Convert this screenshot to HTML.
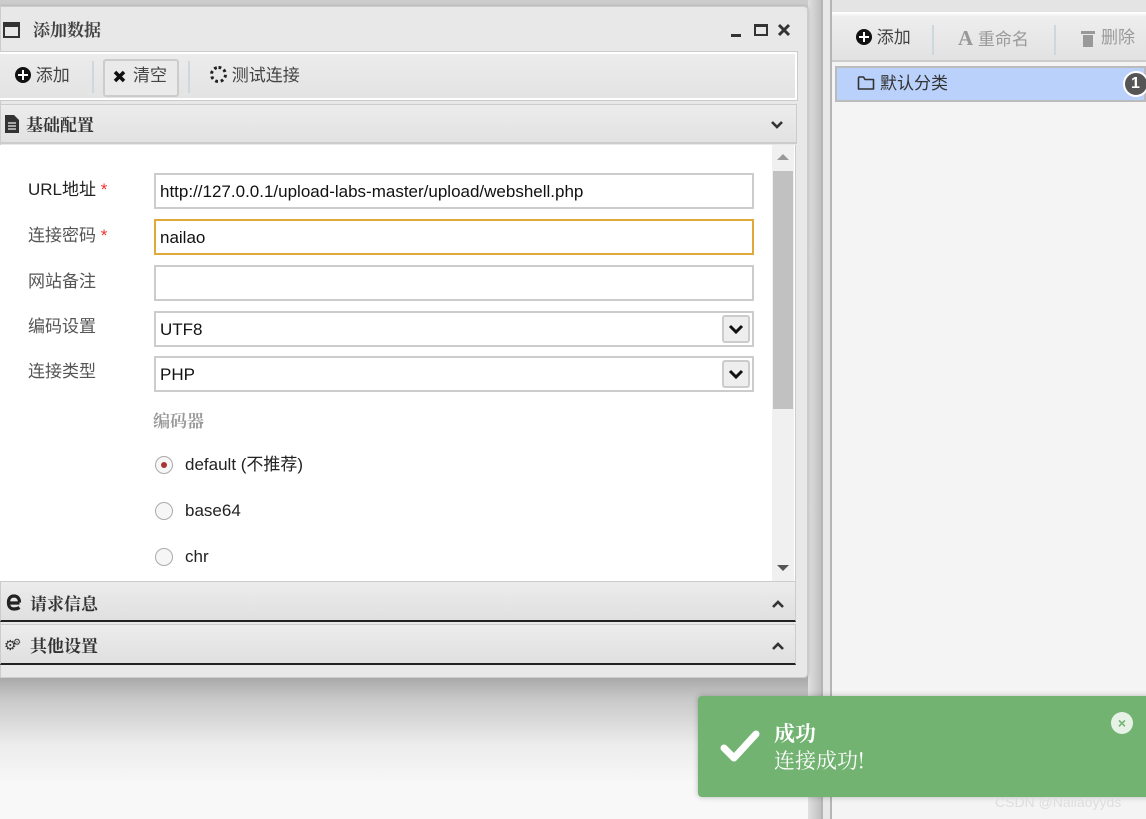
<!DOCTYPE html>
<html><head><meta charset="utf-8"><style>
*{box-sizing:border-box;margin:0;padding:0}
body{width:1146px;height:819px;overflow:hidden;position:relative;background:#fafafa;font-family:"Liberation Sans","Noto Sans CJK SC",sans-serif;color:#333;line-height:20px}
.a{position:absolute}
.cn{font-family:"Noto Serif CJK SC","Noto Sans CJK SC",serif}
.inp{position:absolute;left:154px;width:600px;height:36px;border:2px solid #ccc;background:#fff;font-size:17px;padding:7px 4px;color:#111}
.lbl{position:absolute;left:28px;font-size:17px;color:#555}
.star{color:#e33}
.sel{position:absolute;right:2px;top:2px;width:28px;height:28px;border:2px solid #ccc;border-radius:3px;background:#eee}
.radio{position:absolute;left:155px;width:18px;height:18px;border:1px solid #aaa;border-radius:50%;background:#f6f6f6}
.hdr{position:absolute;left:0;width:796px;height:41px;background:linear-gradient(#ececec,#e0e0e0);border:1px solid #ccc;border-bottom:2px solid #222}
.plus{display:inline-block;width:16px;height:16px;border-radius:50%;background:#111;position:relative;vertical-align:-2px}
.plus:before{content:"";position:absolute;left:3px;top:7px;width:10px;height:2px;background:#fff}
.plus:after{content:"";position:absolute;left:7px;top:3px;width:2px;height:10px;background:#fff}
</style></head><body>
<div class="a" style="left:0;top:0;width:822px;height:819px;background:#f8f8f8"></div>
<div class="a" style="left:0;top:660px;width:820px;height:130px;background:linear-gradient(#8f8f8f,#c8c8c8 30%,#ececec 65%,#f8f8f8 95%)"></div>
<div class="a" style="left:0;top:0;width:822px;height:8px;background:#ccc"></div>
<div class="a" style="left:808px;top:0;width:14px;height:819px;background:linear-gradient(90deg,#e0e0e0,#bdbdbd)"></div>
<div class="a" style="left:821px;top:0;width:2px;height:819px;background:#b5b5b5"></div>
<div class="a" style="left:823px;top:0;width:8px;height:819px;background:#e8e8e8"></div>
<div class="a" style="left:830px;top:0;width:2px;height:819px;background:#b5b5b5"></div>
<!-- right panel -->
<div class="a" style="left:832px;top:0;width:314px;height:819px;background:#f4f4f4"></div>
<div class="a" style="left:832px;top:0;width:314px;height:14px;background:#e4e4e4;border-bottom:2px solid #fff"></div>
<div class="a" style="left:832px;top:16px;width:314px;height:46px;background:linear-gradient(#eee,#e2e2e2);border-bottom:2px solid #ccc"></div>
<div class="a" style="left:856px;top:28px;font-size:17px;color:#444"><span class="plus"></span> 添加</div>
<div class="a" style="left:932px;top:25px;width:2px;height:30px;background:#cdd8dc"></div>
<div class="a" style="left:958px;top:28px;font-size:17px;color:#999"><b style="font-family:'Liberation Serif';font-size:21px">A</b> 重命名</div>
<div class="a" style="left:1054px;top:25px;width:2px;height:30px;background:#cdd8dc"></div>
<div class="a" style="left:1081px;top:31px;width:14px;height:3px;background:#999"></div>
<div class="a" style="left:1083px;top:35px;width:10px;height:12px;background:#999"></div>
<div class="a" style="left:1101px;top:28px;font-size:17px;color:#999">删除</div>
<div class="a" style="left:835px;top:66px;width:311px;height:36px;background:#b9d1fb;border:2px solid #bbb"></div>
<svg class="a" style="left:857px;top:75px" width="18" height="16" viewBox="0 0 18 16"><path d="M1.5 3V14H16.5V4.5H8L6.5 2H2Z" fill="none" stroke="#333" stroke-width="1.6" stroke-linejoin="round"/></svg>
<div class="a" style="left:880px;top:74px;font-size:17px;color:#333">默认分类</div>
<div class="a" style="left:1123px;top:71px;width:26px;height:26px;border-radius:50%;background:#555;border:2px solid #fff;color:#fff;font-size:16px;line-height:22px;padding-left:6px;font-weight:bold">1</div>
<!-- dialog -->
<div class="a" style="left:0;top:6px;width:808px;height:672px;background:#e8e8e8;border:1px solid #ccc;border-radius:0 4px 4px 0;box-shadow:0 0 3px #aaa"></div>
<div class="a" style="left:3px;top:22px;width:17px;height:16px;border:2px solid #333;border-top-width:5px"></div>
<div class="a cn" style="left:33px;top:19px;font-size:17px;color:#444;font-weight:bold">添加数据</div>
<div class="a" style="left:731px;top:34px;width:10px;height:3px;background:#333"></div>
<div class="a" style="left:754px;top:24px;width:14px;height:12px;border:2px solid #333;border-top-width:3px"></div>
<svg class="a" style="left:777px;top:23px" width="14" height="14" viewBox="0 0 14 14"><path d="M2 2L12 12M12 2L2 12" stroke="#333" stroke-width="3"/></svg>
<!-- toolbar -->
<div class="a" style="left:0;top:52px;width:797px;height:48px;border:2px solid #fff;border-left:none;outline:1px solid #ccc;background:linear-gradient(#ececec,#e3e3e3)"></div>
<div class="a" style="left:15px;top:66px;font-size:17px;color:#444"><span class="plus"></span> 添加</div>
<div class="a" style="left:92px;top:61px;width:2px;height:32px;background:#cdd8dc"></div>
<div class="a" style="left:103px;top:59px;width:76px;height:38px;border:2px solid #ccc;border-radius:3px;background:#eaeaea"></div>
<svg class="a" style="left:113px;top:70px" width="13" height="13" viewBox="0 0 13 13"><path d="M2 2L11 11M11 2L2 11" stroke="#111" stroke-width="3.5"/></svg>
<div class="a" style="left:133px;top:66px;font-size:17px;color:#444">清空</div>
<div class="a" style="left:188px;top:61px;width:2px;height:32px;background:#cdd8dc"></div>
<div class="a" style="left:210px;top:66px;font-size:17px;color:#444"><span style="display:inline-block;width:17px;height:17px;border:3px dotted #222;border-radius:50%;vertical-align:-2px"></span> 测试连接</div>
<!-- section header -->
<div class="a" style="left:0;top:104px;width:797px;height:40px;background:linear-gradient(#ececec,#e2e2e2);border:1px solid #ccc;border-bottom:2px solid #ccc"></div>
<svg class="a" style="left:5px;top:115px" width="14" height="18" viewBox="0 0 14 18"><path d="M0 0H9L14 5V18H0Z" fill="#333"/><path d="M3 8H11M3 11H11M3 14H11" stroke="#eee" stroke-width="1.3"/></svg>
<div class="a cn" style="left:26px;top:114px;font-size:17px;font-weight:bold;color:#333">基础配置</div>
<svg class="a" style="left:770px;top:120px" width="14" height="10" viewBox="0 0 14 10"><path d="M2 2l5 5 5-5" stroke="#333" stroke-width="2.6" fill="none"/></svg>
<!-- content -->
<div class="a" style="left:0;top:145px;width:796px;height:436px;background:#fff;border-right:1px solid #ccc"></div>
<div class="a" style="left:772px;top:145px;width:22px;height:436px;background:#f0f0f0"></div>
<div class="a" style="left:773px;top:171px;width:20px;height:238px;background:#c1c1c1"></div>
<div class="a" style="left:777px;top:154px;width:0;height:0;border:6px solid transparent;border-bottom:6px solid #999;border-top:0"></div>
<div class="a" style="left:777px;top:565px;width:0;height:0;border:6px solid transparent;border-top:6px solid #555;border-bottom:0"></div>
<div class="lbl" style="top:180px;color:#222">URL地址 <span class="star">*</span></div>
<div class="inp" style="top:173px">http://127.0.0.1/upload-labs-master/upload/webshell.php</div>
<div class="lbl" style="top:226px">连接密码 <span class="star">*</span></div>
<div class="inp" style="top:219px;border-color:#e0a93a">nailao</div>
<div class="lbl" style="top:272px">网站备注</div>
<div class="inp" style="top:265px"></div>
<div class="lbl" style="top:317px">编码设置</div>
<div class="inp" style="top:311px">UTF8<div class="sel"><svg width="24" height="24" viewBox="0 0 24 24"><path d="M6 9l6 6 6-6" stroke="#111" stroke-width="3" fill="none"/></svg></div></div>
<div class="lbl" style="top:362px">连接类型</div>
<div class="inp" style="top:356px">PHP<div class="sel"><svg width="24" height="24" viewBox="0 0 24 24"><path d="M6 9l6 6 6-6" stroke="#111" stroke-width="3" fill="none"/></svg></div></div>
<div class="a cn" style="left:153px;top:410px;font-size:17px;color:#999;font-weight:bold">编码器</div>
<div class="radio" style="top:456px"><div style="width:6px;height:6px;border-radius:50%;background:#a33;margin:5px"></div></div>
<div class="a" style="left:185px;top:455px;font-size:17px;color:#222">default (不推荐)</div>
<div class="radio" style="top:502px"></div>
<div class="a" style="left:185px;top:501px;font-size:17px;color:#222">base64</div>
<div class="radio" style="top:548px"></div>
<div class="a" style="left:185px;top:547px;font-size:17px;color:#222">chr</div>
<!-- collapsed headers -->
<div class="hdr" style="top:581px"></div>
<svg class="a" style="left:5px;top:593px" width="17" height="19" viewBox="0 0 17 19"><path d="M14.5 10H3.5C3.5 14 6 16 9 16c2 0 4-0.5 5.5-1.5M3.5 9C3.5 5.5 5.5 3 9 3s5.5 2.5 5.5 6.5" stroke="#222" stroke-width="3.2" fill="none"/></svg>
<div class="a cn" style="left:30px;top:593px;font-size:17px;font-weight:bold;color:#333">请求信息</div>
<svg class="a" style="left:771px;top:599px" width="14" height="10" viewBox="0 0 14 10"><path d="M2 8l5-5 5 5" stroke="#333" stroke-width="2.6" fill="none"/></svg>
<div class="hdr" style="top:624px"></div>
<div class="a" style="left:4px;top:635px;font-size:14px;color:#333">⚙</div>
<div class="a" style="left:13px;top:632px;font-size:9px;color:#333">⚙</div>
<div class="a cn" style="left:30px;top:635px;font-size:17px;font-weight:bold;color:#333">其他设置</div>
<svg class="a" style="left:771px;top:641px" width="14" height="10" viewBox="0 0 14 10"><path d="M2 8l5-5 5 5" stroke="#333" stroke-width="2.6" fill="none"/></svg>
<!-- toast -->
<div class="a" style="left:698px;top:696px;width:460px;height:101px;background:#72b372;border-radius:4px;box-shadow:0 0 6px rgba(0,0,0,.25)"></div>
<svg class="a" style="left:720px;top:728px" width="40" height="36" viewBox="0 0 40 36"><path d="M4 20l10 10L36 6" stroke="#fff" stroke-width="7" fill="none" stroke-linecap="round" stroke-linejoin="round"/></svg>
<div class="a cn" style="left:774px;top:721px;font-size:21px;font-weight:bold;color:#fff;line-height:24px">成功</div>
<div class="a cn" style="left:774px;top:748px;font-size:21px;color:#fff;line-height:24px">连接成功!</div>
<div class="a" style="left:1111px;top:712px;width:22px;height:22px;border-radius:50%;background:#e6f2e6;color:#72b372;font-size:14px;text-align:center;line-height:22px;font-weight:bold">×</div>
<div class="a" style="left:995px;top:792px;font-size:14px;color:#ddd">CSDN @Nailaoyyds</div>
</body></html>
